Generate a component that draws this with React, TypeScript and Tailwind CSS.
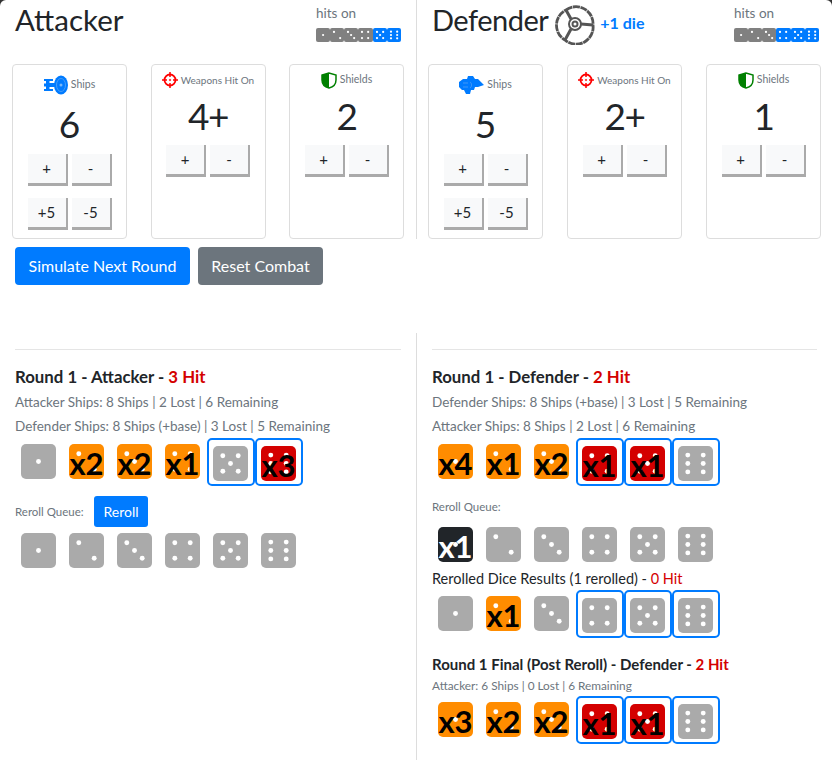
import React from 'react';

type Tone = 'gray' | 'orange' | 'red' | 'dark';

interface DieData {
  face: number;
  tone?: Tone;
  label?: string;
  selected?: boolean;
}

const PIPS: Record<number, [number, number][]> = {
  1: [[50, 50]],
  2: [[28, 28], [72, 72]],
  3: [[28, 28], [50, 50], [72, 72]],
  4: [[28, 28], [72, 28], [28, 72], [72, 72]],
  5: [[28, 28], [72, 28], [50, 50], [28, 72], [72, 72]],
  6: [[28, 26], [72, 26], [28, 50], [72, 50], [28, 74], [72, 74]],
};

const toneClass: Record<Tone, string> = {
  gray: 'bg-[#aaaaaa] text-black',
  orange: 'bg-[#ff8c00] text-black',
  red: 'bg-[#d40000] text-black',
  dark: 'bg-[#212529] text-white',
};

const Pips = ({ face, r = 7 }: { face: number; r?: number }) => (
  <svg viewBox="0 0 100 100" className="absolute inset-0 w-full h-full">
    {PIPS[face].map(([cx, cy]) => (
      <circle key={`${cx}-${cy}`} cx={cx} cy={cy} r={r} fill="#fff" />
    ))}
  </svg>
);

const DieFace = ({ face, tone = 'gray', label }: DieData) => (
  <div className={`relative w-[35px] h-[35px] rounded-[5px] flex items-center justify-center ${toneClass[tone]}`}>
    <Pips face={face} />
    {label && <span className="relative pt-[3px] text-[31px] leading-none font-bold whitespace-nowrap">{label}</span>}
  </div>
);

const Die = (props: DieData) =>
  props.selected ? (
    <div className="w-[48px] h-[48px] border-2 border-[#007bff] rounded-[5px] px-[4px] pt-[6px]">
      <DieFace {...props} />
    </div>
  ) : (
    <div className="w-[48px] h-[48px] px-[6px] pt-[6px]">
      <DieFace {...props} />
    </div>
  );

const DiceRow = ({ dice }: { dice: DieData[] }) => (
  <div className="flex">
    {dice.map((d) => (
      <Die key={d.face} {...d} />
    ))}
  </div>
);

const HitsOn = ({ from }: { from: number }) => (
  <div className="w-[85px]">
    <div className="text-[13.5px] leading-[20px] text-[#6c757d] mt-[3px]">hits on</div>
    <div className="flex mt-[5px]">
      {[1, 2, 3, 4, 5, 6].map((f) => (
        <div
          key={f}
          className={`relative w-[14.17px] h-[14px] rounded-[2px] ${f >= from ? 'bg-[#007bff]' : 'bg-[#808080]'}`}
        >
          <Pips face={f} r={8} />
        </div>
      ))}
    </div>
  </div>
);

const AttackerShip = () => (
  <svg width="24" height="20" viewBox="0 0 24 20">
    <path d="M0 4h9v2H5.500v2H9v4H5.500v2H9v2H0v-2h2v-2.500H0v-3h2V6H0z" fill="#007bff" />
    <rect x="8" y="8" width="6" height="4" fill="#007bff" />
    <ellipse cx="17" cy="10" rx="7" ry="9.500" fill="#007bff" />
    <ellipse cx="17" cy="10" rx="4.500" ry="6.500" fill="none" stroke="#5aa5f5" strokeWidth="0.800" />
    <circle cx="17" cy="10" r="1.500" fill="#7ab8f8" />
  </svg>
);

const DefenderShip = () => (
  <svg width="25" height="20" viewBox="0 0 25 20">
    <path d="M0 7l4-3h4l1-3 5 0 2 3h3l6 6-6 2h-3l-1 3-3 0-1 4-4 0-2-4H3L0 12z" fill="#007bff" />
    <path d="M4 8h5M4 12h5M11 7c2 1 2 5 0 6" stroke="#5aa5f5" strokeWidth="0.700" fill="none" />
  </svg>
);

const Crosshair = () => (
  <svg width="16" height="16" viewBox="0 0 16 16" fill="none" stroke="#ff0000">
    <circle cx="8" cy="8" r="5.500" strokeWidth="1.800" />
    <path d="M8 0v5M8 11v5M0 8h5M11 8h5" strokeWidth="1.500" />
    <circle cx="8" cy="8" r="0.800" fill="#ff0000" strokeWidth="0.500" />
  </svg>
);

const Shield = () => (
  <svg width="16" height="17" viewBox="0 0 16 17">
    <path d="M8 1L1 3v5c0 4 3 7 7 8 4-1 7-4 7-8V3z" fill="#fff" stroke="#008000" strokeWidth="1.500" />
    <path d="M8 1L1 3v5c0 4 3 7 7 8z" fill="#008000" />
  </svg>
);

const BaseWheel = () => (
  <svg width="42" height="42" viewBox="0 0 42 42" fill="none" stroke="#555">
    <path d="M12 7A17 17 0 0 1 39 22A17 17 0 0 1 11 37A17 17 0 0 1 12 7Z" strokeWidth="2.800" strokeDasharray="7 0.600" />
    <path d="M12 7L17 16M39 22L27 21M11 37L17 26" strokeWidth="3" />
    <circle cx="21" cy="21" r="6" strokeWidth="2" />
    <circle cx="21" cy="21" r="2.500" strokeWidth="2" />
  </svg>
);

const StepButton = ({ label }: { label: string }) => (
  <button className="w-[40px] h-[32px] bg-[#f8f9fa] border-r-2 border-b-[3px] border-[#aaaaaa] text-[15px] text-[#212529] flex items-center justify-center">
    {label}
  </button>
);

const ShipsCard = ({ icon, value }: { icon: React.ReactNode; value: string }) => (
  <div className="w-[115px] h-[175px] border border-[#dddddd] rounded-[4px] flex flex-col items-center">
    <div className="h-[20px] mt-[10px] flex items-center gap-[3px] text-[10.5px] text-[#6c757d]">
      {icon}
      <span>Ships</span>
    </div>
    <div className="h-[48px] mt-[5px] text-[37px] leading-[48px] text-[#212529]">{value}</div>
    <div className="flex gap-[4px] mt-[6px]">
      <StepButton label="+" />
      <StepButton label="-" />
    </div>
    <div className="flex gap-[4px] mt-[12px]">
      <StepButton label="+5" />
      <StepButton label="-5" />
    </div>
  </div>
);

const StatCard = ({ icon, title, value, small }: { icon: React.ReactNode; title: string; value: string; small?: boolean }) => (
  <div className="w-[115px] h-[175px] border border-[#dddddd] rounded-[4px] flex flex-col items-center">
    <div
      className={`h-[16px] mt-[7px] flex items-center gap-[3px] text-[#6c757d] whitespace-nowrap ${
        small ? 'text-[10px]' : 'text-[10.5px]'
      }`}
    >
      {icon}
      <span>{title}</span>
    </div>
    <div className="h-[48px] mt-[4px] text-[37px] leading-[48px] tracking-[-1.5px] text-[#212529]">{value}</div>
    <div className="flex gap-[4px] mt-[5px]">
      <StepButton label="+" />
      <StepButton label="-" />
    </div>
  </div>
);

const Red = ({ children }: { children: React.ReactNode }) => <span className="text-[#d40000]">{children}</span>;

const face = (f: number, tone?: Tone, label?: string, selected?: boolean): DieData => ({ face: f, tone, label, selected });

const plainRow: DieData[] = [face(1), face(2), face(3), face(4), face(5), face(6)];

export default function App() {
  return (
    <div className="w-[832px] h-[774px] overflow-hidden bg-[#333333]">
      <div className="w-[832px] h-[774px] overflow-hidden rounded-t-[6px] bg-white text-[#212529] font-['Lato',sans-serif]">
        {/* Setup panels */}
        <div className="flex h-[239px]">
          <div className="w-[416px] px-[12px]">
            <div className="h-[64px] flex justify-between pl-[3px] pr-[3px]">
              <h3 className="text-[29.5px] leading-[40px] font-normal">Attacker</h3>
              <HitsOn from={5} />
            </div>
            <div className="flex justify-between">
              <ShipsCard icon={<AttackerShip />} value="6" />
              <StatCard icon={<Crosshair />} title="Weapons Hit On" value="4+" small />
              <StatCard icon={<Shield />} title="Shields" value="2" />
            </div>
          </div>
          <div className="w-[416px] border-l border-[#dddddd] pl-[11px] pr-[11px]">
            <div className="h-[64px] flex justify-between pl-[4px] pr-[2px]">
              <div className="flex items-start">
                <h3 className="text-[29px] leading-[40px] font-normal tracking-[-0.5px]">Defender</h3>
                <div className="ml-[6px] mt-[3px]">
                  <BaseWheel />
                </div>
                <span className="ml-[4px] mt-[13px] text-[16px] leading-[20px] font-bold text-[#007bff]">+1 die</span>
              </div>
              <HitsOn from={4} />
            </div>
            <div className="flex justify-between">
              <ShipsCard icon={<DefenderShip />} value="5" />
              <StatCard icon={<Crosshair />} title="Weapons Hit On" value="2+" small />
              <StatCard icon={<Shield />} title="Shields" value="1" />
            </div>
          </div>
        </div>

        {/* Actions */}
        <div className="flex gap-[8px] px-[15px] mt-[8px] h-[86px]">
          <button className="h-[38px] w-[175px] rounded-[4px] bg-[#007bff] text-white text-[16px]">Simulate Next Round</button>
          <button className="h-[38px] w-[125px] rounded-[4px] bg-[#6c757d] text-white text-[16px]">Reset Combat</button>
        </div>

        {/* Round results */}
        <div className="flex h-[427px]">
          <div className="w-[416px] px-[15px]">
            <hr className="mt-[16px] border-[#e5e5e5]" />
            <h5 className="mt-[16px] text-[16.8px] leading-[22px] font-bold">
              Round 1 - Attacker - <Red>3 Hit</Red>
            </h5>
            <p className="mt-[2px] text-[13.5px] leading-[24px] text-[#6c757d]">Attacker Ships: 8 Ships | 2 Lost | 6 Remaining</p>
            <p className="text-[13.5px] leading-[24px] text-[#6c757d]">Defender Ships: 8 Ships (+base) | 3 Lost | 5 Remaining</p>
            <DiceRow
              dice={[
                face(1),
                face(2, 'orange', 'x2'),
                face(3, 'orange', 'x2'),
                face(4, 'orange', 'x1'),
                face(5, 'gray', undefined, true),
                face(6, 'red', 'x3', true),
              ]}
            />
            <div className="flex items-center mt-[10px]">
              <span className="w-[79px] text-[11.5px] text-[#6c757d]">Reroll Queue:</span>
              <button className="w-[54px] h-[31px] rounded-[3px] bg-[#007bff] text-white text-[14px]">Reroll</button>
            </div>
            <DiceRow dice={plainRow} />
          </div>
          <div className="w-[416px] border-l border-[#dddddd] px-[15px]">
            <hr className="mt-[16px] border-[#e5e5e5]" />
            <h5 className="mt-[16px] text-[16.8px] leading-[22px] font-bold">
              Round 1 - Defender - <Red>2 Hit</Red>
            </h5>
            <p className="mt-[2px] text-[13.5px] leading-[24px] text-[#6c757d]">Defender Ships: 8 Ships (+base) | 3 Lost | 5 Remaining</p>
            <p className="text-[13.5px] leading-[24px] text-[#6c757d]">Attacker Ships: 8 Ships | 2 Lost | 6 Remaining</p>
            <DiceRow
              dice={[
                face(1, 'orange', 'x4'),
                face(2, 'orange', 'x1'),
                face(3, 'orange', 'x2'),
                face(4, 'red', 'x1', true),
                face(5, 'red', 'x1', true),
                face(6, 'gray', undefined, true),
              ]}
            />
            <div className="mt-[12px] h-[18px] text-[11.5px] leading-[18px] text-[#6c757d]">Reroll Queue:</div>
            <div className="mt-[5px]">
              <DiceRow dice={[face(1, 'dark', 'x1'), face(2), face(3), face(4), face(5), face(6)]} />
            </div>
            <p className="text-[14.5px] leading-[20px]">
              Rerolled Dice Results (1 rerolled) - <Red>0 Hit</Red>
            </p>
            <div className="mt-[1px]">
              <DiceRow
                dice={[
                  face(1),
                  face(2, 'orange', 'x1'),
                  face(3),
                  face(4, 'gray', undefined, true),
                  face(5, 'gray', undefined, true),
                  face(6, 'gray', undefined, true),
                ]}
              />
            </div>
            <h6 className="mt-[16px] text-[15px] leading-[20px] font-bold">
              Round 1 Final (Post Reroll) - Defender - <Red>2 Hit</Red>
            </h6>
            <p className="mt-[2px] text-[11.8px] leading-[20px] text-[#6c757d]">Attacker: 6 Ships | 0 Lost | 6 Remaining</p>
            <DiceRow
              dice={[
                face(1, 'orange', 'x3'),
                face(2, 'orange', 'x2'),
                face(3, 'orange', 'x2'),
                face(4, 'red', 'x1', true),
                face(5, 'red', 'x1', true),
                face(6, 'gray', undefined, true),
              ]}
            />
          </div>
        </div>
      </div>
    </div>
  );
}
